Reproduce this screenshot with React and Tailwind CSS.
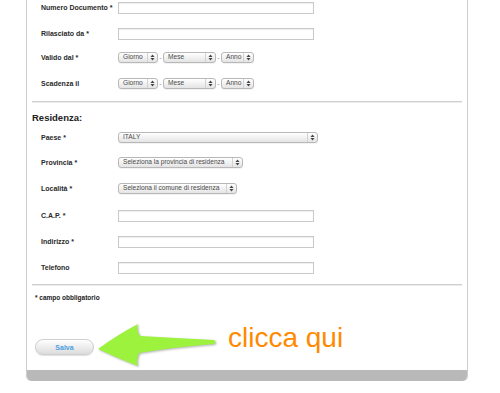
import React from "react";

const font = { fontFamily: '"Liberation Sans", Arial, sans-serif' };

function Arrows() {
  return (
    <svg width="5" height="7" viewBox="0 0 5 7">
      <path d="M2.5 0.5 L4.5 3 L0.5 3 Z" fill="#444" />
      <path d="M2.5 6.5 L4.5 4 L0.5 4 Z" fill="#444" />
    </svg>
  );
}

function Select({ w, text }) {
  return (
    <div
      className={`${w} h-[11px] flex rounded-[3px] border border-[#b8b8b8] bg-linear-to-b from-white to-[#e4e4e4] shadow-[0_1px_0_rgba(0,0,0,0.05)]`}
    >
      <div className="flex-1 flex items-center pl-[4px] text-[6.6px] leading-none text-[#4a4a4a] whitespace-nowrap overflow-hidden">
        {text}
      </div>
      <div className="w-[10px] border-l border-[#d2d2d2] flex items-center justify-center">
        <Arrows />
      </div>
    </div>
  );
}

function Input() {
  return (
    <div className="w-[196px] h-[12px] border border-[#c9c9c9] bg-white shadow-[inset_0_1px_1px_rgba(0,0,0,0.07)]" />
  );
}

function Row({ label, children, mt }) {
  return (
    <div className={`flex items-center h-[11px] pl-[9px] ${mt}`}>
      <div className="w-[77px] text-[7px] font-bold leading-none text-[#2a2a2a] whitespace-nowrap">
        {label}
      </div>
      {children}
    </div>
  );
}

function Dash() {
  return (
    <div className="w-[5px] flex justify-center text-[7px] leading-none text-[#888]">-</div>
  );
}

function DateSel() {
  return (
    <div className="flex items-center">
      <Select w="w-[40px]" text="Giorno" />
      <Dash />
      <Select w="w-[53px]" text="Mese" />
      <Dash />
      <Select w="w-[33px]" text="Anno" />
    </div>
  );
}

export default function App() {
  return (
    <div className="relative w-[500px] h-[393px] bg-white overflow-hidden" style={font}>
      <div className="ml-[26px] w-[442px] border-x border-[#cdcdcd] rounded-b-[5px] overflow-hidden">
        <div className="px-[5px] flex flex-col">
          <Row label="Numero Documento *" mt="mt-[2px]">
            <Input />
          </Row>
          <Row label="Rilasciato da *" mt="mt-[15px]">
            <Input />
          </Row>
          <Row label="Valido dal *" mt="mt-[13px]">
            <DateSel />
          </Row>
          <Row label="Scadenza il" mt="mt-[15px]">
            <DateSel />
          </Row>
          <div className="mt-[12px] h-[1px] bg-[#cfcfcf] shadow-[0_1px_0_#ececec]" />
          <div className="mt-[10px] h-[11px] flex items-center text-[9.5px] font-bold leading-none text-[#222]">
            Residenza:
          </div>
          <Row label="Paese *" mt="mt-[9px]">
            <Select w="w-[200px]" text="ITALY" />
          </Row>
          <Row label="Provincia *" mt="mt-[14px]">
            <Select w="w-[125px]" text="Seleziona la provincia di residenza" />
          </Row>
          <Row label="Località *" mt="mt-[15px]">
            <Select w="w-[119px]" text="Seleziona il comune di residenza" />
          </Row>
          <Row label="C.A.P. *" mt="mt-[16px]">
            <Input />
          </Row>
          <Row label="Indirizzo *" mt="mt-[15px]">
            <Input />
          </Row>
          <Row label="Telefono" mt="mt-[15px]">
            <Input />
          </Row>
          <div className="mt-[11px] h-[1px] bg-[#cfcfcf] shadow-[0_1px_0_#ececec]" />
          <div className="mt-[8px] h-[10px] flex items-center pl-[3px] text-[6.5px] font-bold leading-none text-[#222]">
            * campo obbligatorio
          </div>
          <div className="mt-[36px] ml-[3px] w-[59px] h-[16px] rounded-full border border-[#cfcfcf] bg-linear-to-b from-white to-[#dcdcdc] shadow-[0_1px_1px_rgba(0,0,0,0.12)] flex items-center justify-center text-[7px] font-bold leading-none text-[#4b9fe1]">
            Salva
          </div>
        </div>
        <div className="mt-[15px] h-[11px] bg-[#b9b9b9]" />
      </div>

      <svg
        className="absolute left-[95px] top-[320px] drop-shadow-[1px_1px_1px_rgba(0,0,0,0.3)]"
        width="125"
        height="50"
        viewBox="0 0 125 50"
      >
        <path
          d="M3 29 Q22 15 43 4 Q41 10 45 16 Q80 18 119 20 Q122 22 119 24 Q80 27 44 33 Q41 40 43 46 Q22 38 3 29 Z"
          fill="#9cf23c"
        />
      </svg>

      <div className="absolute left-[228px] top-[324px] text-[28px] leading-none text-[#ff8a00] whitespace-nowrap">
        clicca qui
      </div>
    </div>
  );
}
